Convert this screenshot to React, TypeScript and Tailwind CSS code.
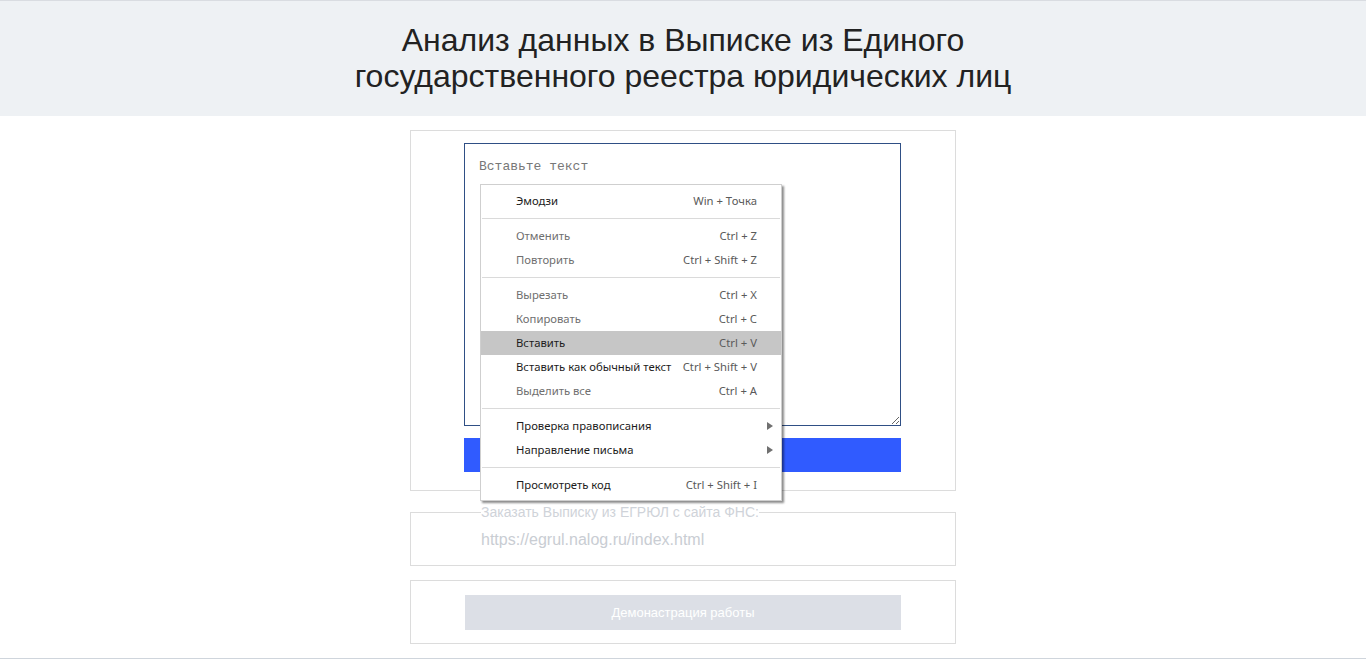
import React from "react";

type Item =
  | { sep: true }
  | { label: string; key?: string; disabled?: boolean; hl?: boolean; sub?: boolean };

const items: Item[] = [
  { label: "Эмодзи", key: "Win + Точка" },
  { sep: true },
  { label: "Отменить", key: "Ctrl + Z", disabled: true },
  { label: "Повторить", key: "Ctrl + Shift + Z", disabled: true },
  { sep: true },
  { label: "Вырезать", key: "Ctrl + X", disabled: true },
  { label: "Копировать", key: "Ctrl + C", disabled: true },
  { label: "Вставить", key: "Ctrl + V", hl: true },
  { label: "Вставить как обычный текст", key: "Ctrl + Shift + V" },
  { label: "Выделить все", key: "Ctrl + A", disabled: true },
  { sep: true },
  { label: "Проверка правописания", sub: true },
  { label: "Направление письма", sub: true },
  { sep: true },
  { label: "Просмотреть код", key: "Ctrl + Shift + I" },
];

function ContextMenu() {
  return (
    <div
      className="absolute left-[69px] top-[53px] w-[302px] bg-white border border-[#cfcfcf] pt-[4px] pb-[3px] shadow-[2px_2px_2px_rgba(0,0,0,0.45)] z-10"
      style={{ fontFamily: '"Noto Sans", "Open Sans", sans-serif' }}
    >
      {items.map((it, i) =>
        "sep" in it ? (
          <div key={i} className="h-[11px] flex items-center px-[1px]">
            <div className="h-px w-full bg-[#dadada]" />
          </div>
        ) : (
          <div
            key={i}
            className={`h-[24px] flex items-center justify-between pl-[35px] pr-[24px] text-[11.3px] ${
              it.hl ? "bg-[#c6c6c6]" : ""
            }`}
          >
            <span className={it.disabled ? "text-[#6f6f6f]" : "text-[#1c1c1c]"}>{it.label}</span>
            {it.key ? (
              <span className="text-[#5a5a5a]">{it.key}</span>
            ) : it.sub ? (
              <svg width="6" height="8" viewBox="0 0 6 8" className="-mr-[16px]">
                <path d="M0 0 L6 4 L0 8 Z" fill="#707070" />
              </svg>
            ) : null}
          </div>
        )
      )}
    </div>
  );
}

export default function App() {
  return (
    <div
      className="w-[1366px] min-h-[659px] bg-white"
      style={{ fontFamily: '"Liberation Sans", Arial, sans-serif' }}
    >
      <header className="h-[116px] bg-[#eef1f4] border-t border-[#d9dce1] flex items-center justify-center">
        <h1 className="text-center text-[32px] leading-[36px] text-[#222] font-normal -mt-[2px]">
          Анализ данных в Выписке из Единого
          <br />
          государственного реестра юридических лиц
        </h1>
      </header>

      <div className="w-[546px] mx-auto mt-[14px] flex flex-col">
        <div className="relative border border-[#dcdcdc] pt-[12px] pb-[18px] pl-[53px] pr-[54px]">
          <textarea
            placeholder="Вставьте текст"
            className="block w-full h-[283px] border border-[#2f4f85] outline-none px-[14px] py-[15px] text-[13px] leading-[16px] placeholder:text-[#777] text-[#333]"
            style={{ fontFamily: '"Liberation Mono", "DejaVu Sans Mono", monospace' }}
          />
          <button className="mt-[12px] block w-full h-[34px] bg-[#305bff] text-white text-[14px]">
            Анализировать
          </button>
          <ContextMenu />
        </div>

        <fieldset className="mt-[13px] border border-[#dcdcdc] pl-[70px] pr-[20px] pb-[15px] pt-[10px]">
          <legend className="text-[14px] leading-[16px] text-[#cfd3d9]">
            Заказать Выписку из ЕГРЮЛ с сайта ФНС:
          </legend>
          <a className="block text-[16px] leading-[20px] text-[#c9cdd3]">
            https://egrul.nalog.ru/index.html
          </a>
        </fieldset>

        <div className="mt-[14px] border border-[#dcdcdc] pt-[14px] pb-[13px] pl-[54px] pr-[54px]">
          <button className="block w-full h-[35px] bg-[#dcdfe6] text-white text-[13px]">
            Демонастрация работы
          </button>
        </div>
      </div>
      <div className="mt-[14px] h-px bg-[#cfd5dc]" />
    </div>
  );
}
